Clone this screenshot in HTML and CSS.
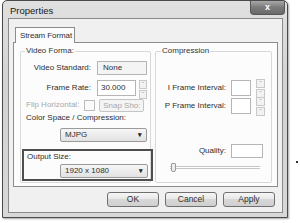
FILE: index.html
```html
<!DOCTYPE html>
<html>
<head>
    <meta charset="UTF-8">
    <title>Properties</title>
    <link rel="stylesheet" href="styles.css">
</head>
<body>
<div class="window">
    <div class="titlebar">
        <span class="title">Properties</span>
        <div class="close">x</div>
    </div>
    <div class="client">
        <div class="tabs"><div class="tab">Stream Format</div></div>
        <div class="panel">
            <fieldset class="group video">
                <legend>Video Forma:</legend>
                <div class="row r1">
                    <span class="lbl">Video Standard:</span>
                    <span class="box std">None</span>
                </div>
                <div class="row r2">
                    <span class="lbl">Frame Rate:</span>
                    <span class="box rate">30.000</span>
                    <span class="spin"><i>&#710;</i><i>&#711;</i></span>
                </div>
                <div class="row r3">
                    <span class="lbl flip">Flip Horizontal:</span>
                    <span class="check"></span>
                    <span class="snap">Snap Sho:</span>
                </div>
                <div class="caption">Color Space / Compression:</div>
                <div class="combo mjpg"><span>MJPG</span><b>&#9662;</b></div>
                <div class="outsize">
                    <div class="caption2">Output Size:</div>
                    <div class="combo res"><span>1920 x 1080</span><b>&#9662;</b></div>
                </div>
            </fieldset>
            <fieldset class="group compression">
                <legend>Compression</legend>
                <div class="crow c1">
                    <span class="clbl">I Frame Interval:</span>
                    <span class="box ival"></span>
                    <span class="spin tall"><i>&#710;</i><i>&#711;</i></span>
                </div>
                <div class="crow c2">
                    <span class="clbl">P Frame Interval:</span>
                    <span class="box ival"></span>
                    <span class="spin tall"><i>&#710;</i><i>&#711;</i></span>
                </div>
                <div class="crow c3">
                    <span class="clbl">Quality:</span>
                    <span class="box qual"></span>
                </div>
                <div class="slider"><span class="thumb"></span></div>
            </fieldset>
        </div>
        <div class="buttons">
            <div class="btn">OK</div>
            <div class="btn">Cancel</div>
            <div class="btn">Apply</div>
        </div>
    </div>
</div>
<div class="dot"></div>
</body>
</html>
```

FILE: styles.css
```css
body {
    margin: 0;
    width: 300px;
    height: 223px;
    background: #fff;
    position: relative;
    overflow: hidden;
    font-family: "Liberation Sans", Arial, sans-serif;
    font-size: 8px;
    line-height: 10px;
    color: #2e2e2e;
    white-space: nowrap;
}

div, span, fieldset {
    box-sizing: border-box;
}

.window {
    margin-left: 2px;
    width: 286px;
    height: 218px;
    border: 1px solid #4a4a4a;
    border-radius: 5px 5px 0 0;
    background: linear-gradient(#e0e0e0, #d2d2d2 40%, #d8d8d8);
    padding: 0 4px 4px 5px;
    display: flex;
    flex-direction: column;
    box-shadow: 1px 1px 2px rgba(0,0,0,0.35);
}

.titlebar {
    height: 17px;
    display: flex;
    align-items: flex-start;
}

.title {
    margin: 5px 0 0 2px;
    font-size: 9.5px;
    color: #1a1a1a;
}

.close {
    margin-left: auto;
    margin-right: -2px;
    width: 35px;
    height: 14px;
    border: 1px solid #555;
    border-top: none;
    border-radius: 0 0 4px 4px;
    background: linear-gradient(#a8a8a8, #7a7a7a 50%, #6a6a6a);
    color: #fff;
    font-weight: 700;
    font-size: 9px;
    text-align: center;
    line-height: 12px;
}

.client {
    flex: 1;
    background: #f0f0f0;
    border: 1px solid #8a8a8a;
    padding: 8px 4px 0 4px;
    display: flex;
    flex-direction: column;
}

.tabs {
    display: flex;
    padding-left: 2px;
    margin-bottom: -1px;
    position: relative;
}

.tab {
    width: 60px;
    height: 16px;
    border: 1px solid #8c8c8c;
    border-bottom: none;
    background: #fcfcfc;
    padding: 3px 0 0 4px;
    letter-spacing: -0.1px;
}

.panel {
    height: 145px;
    border: 1px solid #8c8c8c;
    background: #fcfcfc;
    display: flex;
    padding-left: 6px;
}

.group {
    margin: 3px 0 0 0;
    padding: 0;
    height: 137px;
    border: 1px solid #d8d8d8;
    border-radius: 2px;
    min-width: 0;
}

.group legend {
    padding: 0 1px;
    margin-left: 4px;
    color: #333;
}

.video {
    width: 131px;
}

.compression {
    width: 117px;
    margin-left: 4px;
}

.compression legend {
    margin-left: 5px;
}

.row {
    display: flex;
    align-items: center;
}

.lbl {
    width: 71px;
    text-align: right;
    padding-right: 1px;
}

.box {
    border: 1px solid #b5b5b5;
    background: #fff;
    display: flex;
    align-items: center;
}

.r1 {
    margin-top: 5px;
    height: 14px;
}

.std {
    margin-left: 5px;
    width: 50px;
    height: 14px;
    padding-left: 5px;
    background: #f4f4f4;
}

.r2 {
    margin-top: 5px;
    height: 16px;
}

.rate {
    margin-left: 5px;
    width: 39px;
    height: 16px;
    padding-left: 3px;
}

.spin {
    margin-left: 3px;
    width: 8px;
    height: 16px;
    display: flex;
    flex-direction: column;
    gap: 1px;
}

.spin i {
    flex: 1;
    border: 1px solid #c8c8c8;
    background: #f2f2f2;
    font-style: normal;
    font-size: 6px;
    line-height: 7px;
    color: #999;
    text-align: center;
}

.spin.tall {
    margin-left: 5px;
    width: 9px;
    height: 17px;
}

.r3 {
    margin-top: 3px;
    height: 12px;
    color: #a8a8a8;
}

.flip {
    width: auto;
    padding-left: 5px;
    text-align: left;
}

.check {
    margin-left: 4px;
    width: 11px;
    height: 11px;
    border: 1px solid #bcbcbc;
    background: #fafafa;
}

.snap {
    margin-left: 4px;
    width: 45px;
    height: 13px;
    border: 1px solid #c4c4c4;
    border-radius: 2px;
    background: #f4f4f4;
    text-align: center;
    line-height: 11px;
}

.caption {
    margin-top: 2px;
    padding-left: 5px;
    height: 10px;
}

.combo {
    height: 14px;
    border: 1px solid #9a9a9a;
    border-radius: 2px;
    background: linear-gradient(#f6f6f6, #e2e2e2);
    display: flex;
    align-items: center;
    padding: 0 4px;
}

.combo b {
    margin-left: auto;
    font-size: 7px;
    color: #222;
}

.mjpg {
    margin: 5px 0 0 39px;
    width: 87px;
}

.outsize {
    margin: 7px 0 0 1px;
    width: 131px;
    height: 32px;
    border: 2px solid #4e4e4e;
}

.caption2 {
    padding: 1px 0 0 3px;
    height: 11px;
}

.res {
    margin: 2px 0 0 36px;
    width: 88px;
}

.crow {
    display: flex;
    align-items: center;
}

.clbl {
    width: 70px;
    text-align: right;
}

.c1 {
    margin-top: 23px;
    height: 17px;
}

.c2 {
    margin-top: 1px;
    height: 17px;
}

.ival {
    margin-left: 5px;
    width: 20px;
    height: 16px;
}

.c3 {
    margin-top: 30px;
    height: 14px;
}

.qual {
    margin-left: 5px;
    width: 32px;
    height: 14px;
}

.slider {
    margin: 5px 0 0 14px;
    width: 90px;
    height: 9px;
    display: flex;
    align-items: center;
    background: linear-gradient(transparent 3px, #c6c6c6 3px, #c6c6c6 4px, #fff 4px, #fff 5px, #c6c6c6 5px, #c6c6c6 6px, transparent 6px);
}

.thumb {
    margin-left: 1px;
    width: 5px;
    height: 9px;
    border: 1px solid #9a9a9a;
    border-radius: 1px 1px 2px 2px;
    background: #eee;
}

.buttons {
    display: flex;
    justify-content: flex-end;
    gap: 6px;
    margin-top: 5px;
    padding-right: 3px;
}

.btn {
    width: 52px;
    height: 15px;
    border: 1px solid #707070;
    border-radius: 3px;
    background: linear-gradient(#f6f6f6, #e6e6e6 50%, #d8d8d8 50%, #cfcfcf);
    text-align: center;
    line-height: 13px;
    font-size: 8.5px;
}

.dot {
    position: absolute;
    left: 296px;
    top: 161px;
    width: 2px;
    height: 2px;
    background: #333;
}
```
